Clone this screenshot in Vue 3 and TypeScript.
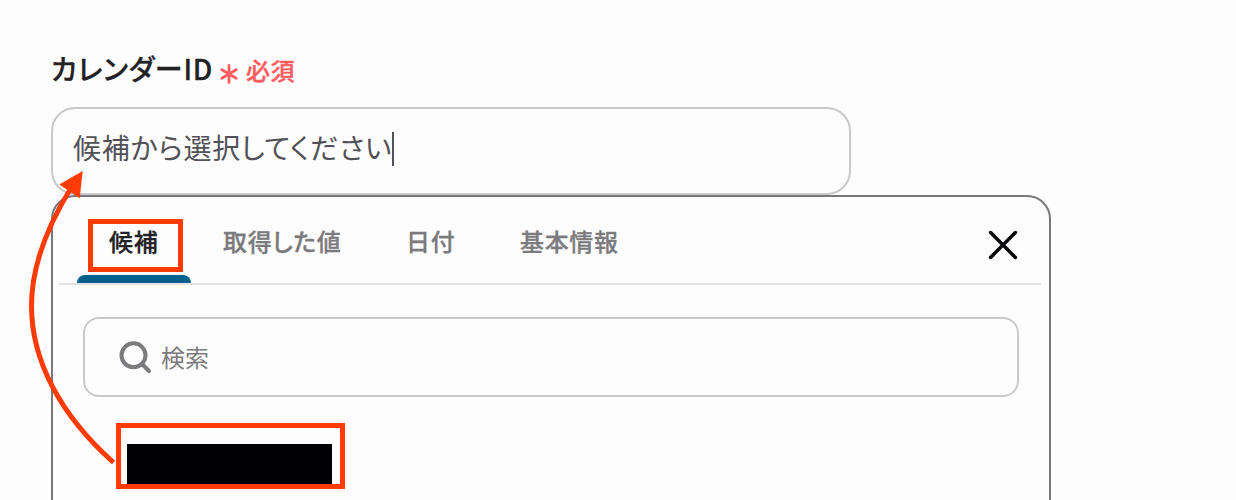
<script setup lang="ts">
interface Tab {
  id: string
  label: string
}

const tabs: Tab[] = [
  { id: 'candidate', label: '候補' },
  { id: 'value', label: '取得した値' },
  { id: 'date', label: '日付' },
  { id: 'basic', label: '基本情報' },
]
const activeTab = 'candidate'
</script>

<template>
  <main class="page">
    <div class="label">
      <span class="label-text">カレンダーID</span>
      <svg class="asterisk" width="18" height="20" viewBox="0 0 18 20">
        <path d="M9 1.5V18.5M1.8 5.8L16.2 14.2M16.2 5.8L1.8 14.2" />
      </svg>
      <span class="required">必須</span>
    </div>

    <div class="field">
      <span class="field-text">候補から選択してください</span>
      <span class="caret"></span>
    </div>

    <section class="panel">
      <nav class="tabs">
        <div
          v-for="tab in tabs"
          :key="tab.id"
          class="tab"
          :class="[tab.id, { active: tab.id === activeTab }]"
        >
          <span>{{ tab.label }}</span>
        </div>
        <svg class="close" width="30" height="30" viewBox="0 0 30 30">
          <path d="M2.6 2.6L27.4 27.4M27.4 2.6L2.6 27.4" />
        </svg>
      </nav>

      <div class="search">
        <svg class="search-icon" width="34" height="34" viewBox="0 0 34 34">
          <circle cx="15.5" cy="15.3" r="12" />
          <path d="M24 24L31 31" />
        </svg>
        <span class="search-text">検索</span>
      </div>

      <div class="option">
        <div class="redacted"></div>
      </div>
    </section>

    <svg class="arrow" width="110" height="320" viewBox="20 160 110 320">
      <path class="arrow-line" d="M113.5 462.5C60 415 31.5 360 31.5 306C31.5 270 45 230 71 188" />
      <path class="arrow-head" d="M82.7 171L59.3 184.5L79.7 198.3Z" />
    </svg>
  </main>
</template>

<style>
body {
  background: #fdfdfd;
}
</style>

<style scoped>
.page {
  position: relative;
  box-sizing: border-box;
  width: 1236px;
  height: 500px;
  padding: 48px 0 0 51px;
  overflow: hidden;
  background: #fdfdfd;
  font-family: "Noto Sans CJK JP", sans-serif;
  white-space: nowrap;
}
.label {
  display: flex;
  align-items: center;
  height: 40px;
}
.label-text {
  width: 169px;
  color: #222225;
  font-size: 28px;
  line-height: 40px;
  font-weight: 500;
  font-feature-settings: "palt";
  letter-spacing: 0.75px;
  -webkit-text-stroke: 0.3px;
}
.asterisk {
  margin-top: 12px;
  fill: none;
  stroke: #ff5c60;
  stroke-width: 2.8;
  stroke-linecap: round;
}
.required {
  margin: 3px 0 0 8px;
  color: #ff5c60;
  font-size: 24px;
  font-weight: 500;
  font-feature-settings: "palt";
  letter-spacing: 0.6px;
  -webkit-text-stroke: 0.4px;
}
.field {
  display: flex;
  align-items: flex-start;
  box-sizing: border-box;
  width: 800px;
  height: 88px;
  margin-top: 19px;
  padding: 18px 0 0 20px;
  border: 2px solid #c9c8cb;
  border-radius: 24px;
}
.field-text {
  width: 319px;
  color: #525158;
  font-size: 28px;
  line-height: 40px;
  font-feature-settings: "palt";
  letter-spacing: 0.76px;
}
.caret {
  width: 2px;
  height: 34px;
  margin-top: 5px;
  background: #525158;
}
.panel {
  box-sizing: border-box;
  width: 1000px;
  height: 330px;
  border: 2px solid #78777b;
  border-radius: 24px;
  background: #fdfdfd;
}
.tabs {
  display: flex;
  align-items: flex-start;
  box-sizing: border-box;
  width: 982px;
  height: 88px;
  margin-left: 6px;
  padding: 22px 0 0 18px;
  border-bottom: 2px solid #e3e3e5;
}
.tab {
  box-sizing: border-box;
  height: 64px;
  padding-top: 4px;
  color: #7b7a7d;
  font-size: 24px;
  line-height: 36px;
  font-weight: 500;
  font-feature-settings: "palt";
  letter-spacing: 0.65px;
  -webkit-text-stroke: 0.3px;
}
.tab.active {
  position: relative;
  width: 114px;
  padding: 0 0 0 11px;
  color: #222225;
}
.tab.active::after {
  content: "";
  position: absolute;
  left: 0;
  bottom: 0;
  width: 114px;
  height: 8px;
  border-radius: 8px 8px 0 0;
  background: #03628d;
}
.tab.active span {
  display: block;
  box-sizing: border-box;
  width: 95px;
  height: 53px;
  padding-left: 16px;
  border: 5px solid #ff3b05;
  line-height: 34px;
}
.tab.value {
  width: 184px;
  padding-left: 32px;
}
.tab.date {
  width: 113px;
  padding-left: 31px;
}
.tab.basic {
  width: 500px;
  padding-left: 32px;
}
.close {
  flex: none;
  margin-top: 11px;
  fill: none;
  stroke: #050507;
  stroke-width: 3.5;
  stroke-linecap: round;
}
.search {
  display: flex;
  align-items: center;
  box-sizing: border-box;
  width: 936px;
  height: 80px;
  margin: 32px 0 0 30px;
  padding-left: 33px;
  border: 2px solid #c9c8cb;
  border-radius: 16px;
  color: #7b7a7d;
  font-size: 24px;
}
.search-icon {
  margin-right: 9px;
  fill: none;
  stroke: #7b7a7d;
  stroke-width: 4;
  stroke-linecap: round;
}
.search-text {
  margin-bottom: 2px;
}
.option {
  box-sizing: border-box;
  width: 229px;
  height: 66px;
  margin: 26px 0 0 63px;
  padding: 16px 0 0 6px;
  border: 5px solid #ff3b05;
}
.redacted {
  width: 205px;
  height: 40px;
  background: #020104;
}
.arrow {
  position: absolute;
  left: 20px;
  top: 160px;
}
.arrow-line {
  fill: none;
  stroke: #ff3b05;
  stroke-width: 5;
}
.arrow-head {
  fill: #ff3b05;
}
</style>
